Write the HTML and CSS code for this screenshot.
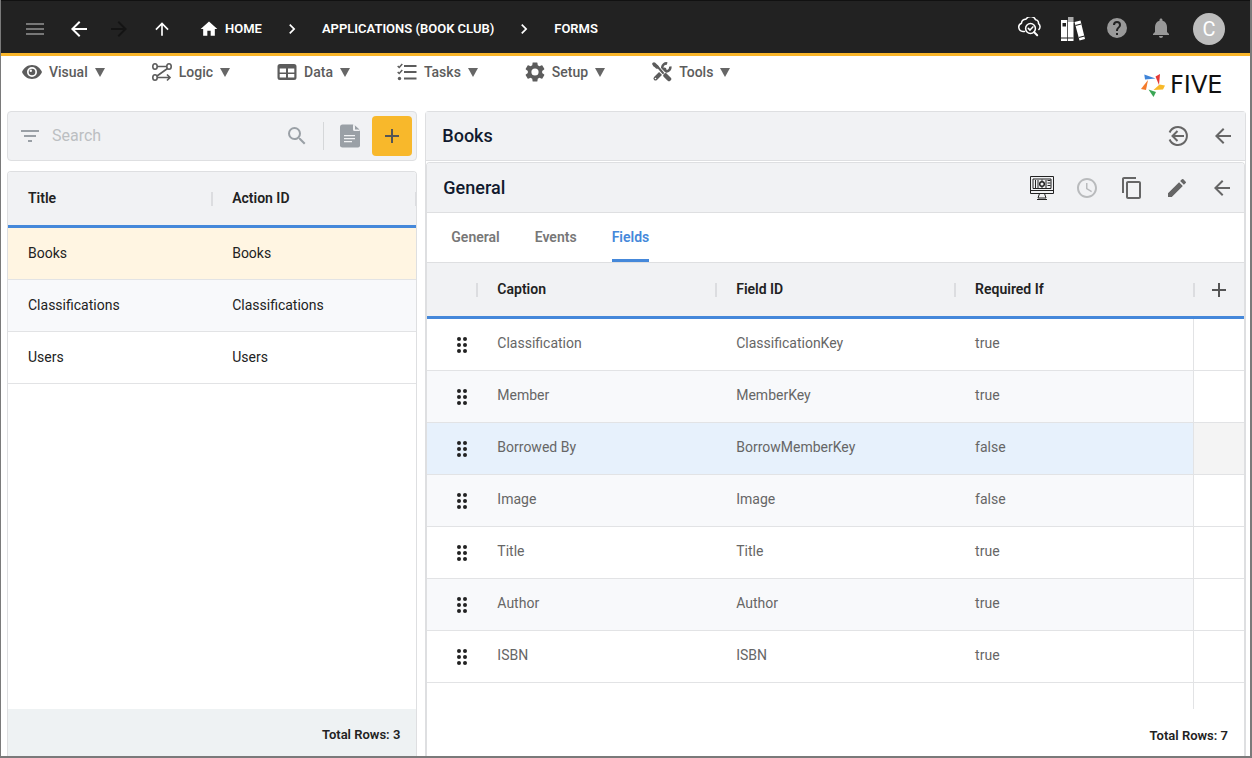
FILE: index.html
```html
<!DOCTYPE html>
<html lang="en">
<head>
<meta charset="utf-8">
<meta name="viewport" content="width=device-width, initial-scale=1">
<title>Forms - Five</title>
<link rel="stylesheet" href="styles.css">
</head>
<body>
<svg class="defs" aria-hidden="true">
  <symbol id="arrow-left" viewBox="0 0 24 24"><path d="M20 11H7.83l5.59-5.59L12 4l-8 8 8 8 1.41-1.41L7.83 13H20z"/></symbol>
  <symbol id="plus" viewBox="0 0 24 24"><path d="M19 13h-6v6h-2v-6H5v-2h6V5h2v6h6z"/></symbol>
  <symbol id="chevron" viewBox="0 0 24 24"><path d="M10 6 8.59 7.41 13.17 12l-4.58 4.59L10 18l6-6z"/></symbol>
  <symbol id="caret" viewBox="0 0 10 10"><path d="M0 1h10L5 10z"/></symbol>
  <symbol id="drag" viewBox="0 0 12 18"><g><circle cx="3" cy="3" r="2"/><circle cx="9" cy="3" r="2"/><circle cx="3" cy="9" r="2"/><circle cx="9" cy="9" r="2"/><circle cx="3" cy="15" r="2"/><circle cx="9" cy="15" r="2"/></g></symbol>
</svg>
<div class="app">
  <header class="topbar">
    <button class="nav-btn menu-btn" aria-label="Menu"><svg class="icon" viewBox="0 0 24 24"><path d="M3 18h18v-2H3zm0-5h18v-2H3zm0-7v2h18V6z"/></svg></button>
    <button class="nav-btn" aria-label="Back"><svg class="icon"><use href="#arrow-left"/></svg></button>
    <button class="nav-btn forward-btn" aria-label="Forward" disabled><svg class="icon" viewBox="0 0 24 24"><path d="m12 4-1.41 1.41L16.17 11H4v2h12.17l-5.58 5.59L12 20l8-8z"/></svg></button>
    <button class="nav-btn up-btn" aria-label="Up"><svg class="icon icon-sm" viewBox="0 0 24 24"><path d="m4 12 1.41 1.41L11 7.83V20h2V7.83l5.58 5.59L20 12l-8-8z"/></svg></button>
    <nav class="crumbs" aria-label="Breadcrumb">
      <a href="#" class="crumb"><svg class="icon icon-sm" viewBox="0 0 24 24"><path d="M10 20v-6h4v6h5v-8h3L12 3 2 12h3v8z"/></svg>HOME</a>
      <svg class="icon icon-sm"><use href="#chevron"/></svg>
      <a href="#" class="crumb">APPLICATIONS (BOOK CLUB)</a>
      <svg class="icon icon-sm"><use href="#chevron"/></svg>
      <a href="#" class="crumb">FORMS</a>
    </nav>
    <div class="tools">
      <button class="tool-btn" aria-label="Inspect cloud"><svg class="icon" viewBox="0 1 24 24"><g fill="none" stroke="currentColor" stroke-width="1.500" stroke-linecap="round" stroke-linejoin="round"><path d="M7.500 15.500H6A4.300 4.300 0 0 1 4.500 7.200C4.600 4.500 6.800 3 9 3.200 11.500-.5 17-.2 18.500 3.800c2.200.2 3.300 2 3 3.900 2 1.500 2 4.400.4 5.800"/><circle cx="13.500" cy="12.500" r="4.900"/><path d="m11.300 12.400 1.700 1.700 2.900-3.200"/><path d="m17.200 16.200 3 3" stroke-width="2"/></g></svg></button>
      <button class="tool-btn" aria-label="Library"><svg class="icon" viewBox="0 0 24 24"><path d="M0 3h6.500v21H0zM13.500 5l6-1.500L24 22l-5.500 1.500z"/><path fill="#aaa" d="M7 0h5.500v6H7z"/><path d="M7 5h5.500v19H7z"/><g fill="#222"><path d="M1.500 6H5v3.500H1.500zM0 20.500h6.500v1H0zM7 20.500h5.500v1H7zM14.300 8l5.700-1.400.3 1-5.700 1.400zM17.700 20l5.700-1.400.3 1-5.700 1.400zM6.500 3H7v21h-.5z"/></g></svg></button>
      <button class="tool-btn dim" aria-label="Help"><svg class="icon" viewBox="0 1 24 24"><path d="M12 2a10 10 0 1 0 0 20 10 10 0 0 0 0-20m1 17h-2v-2h2zm2.070-7.750-.9.920C13.450 12.900 13 13.500 13 15h-2v-.5c0-1.100.450-2.100 1.170-2.830l1.240-1.260c.370-.360.590-.860.590-1.410a2 2 0 0 0-4 0H8a4 4 0 0 1 8 0c0 .880-.360 1.680-.930 2.250"/></svg></button>
      <button class="tool-btn dim" aria-label="Notifications"><svg class="icon" viewBox="0 1 24 24"><path d="M12 22c1.100 0 2-.9 2-2h-4c0 1.100.890 2 2 2m6-6v-5c0-3.070-1.640-5.640-4.500-6.320V4c0-.830-.670-1.500-1.500-1.500s-1.500.670-1.500 1.500v.680C7.630 5.360 6 7.920 6 11v5l-2 2v1h16v-1z"/></svg></button>
      <button class="avatar" aria-label="Account">C</button>
    </div>
  </header>

  <div class="menubar">
    <nav class="menus" aria-label="Main">
      <button class="menu"><svg class="menu-icon" viewBox="0 0 20 20"><path d="M10 3C5.500 3 1.700 5.800 0 10c1.700 4.200 5.500 7 10 7s8.300-2.800 10-7c-1.700-4.200-5.500-7-10-7m0 12a5 5 0 1 1 0-10 5 5 0 0 1 0 10"/><circle cx="10" cy="10" r="3.300"/><circle cx="8.800" cy="8.700" r="1.200" fill="#fff"/></svg>Visual<svg class="caret"><use href="#caret"/></svg></button>
      <button class="menu"><svg class="menu-icon" viewBox="0 0 20 20"><g fill="none" stroke="currentColor" stroke-width="1.600"><ellipse cx="3" cy="4.500" rx="2.200" ry="2.800"/><ellipse cx="17" cy="4.500" rx="2.200" ry="2.800"/><ellipse cx="3" cy="15.500" rx="2.200" ry="2.800"/><path d="M5 4.500h10M15.500 6.500 5 14M5 15.500h13M15 12.500l3 3-3 3"/></g></svg>Logic<svg class="caret"><use href="#caret"/></svg></button>
      <button class="menu"><svg class="menu-icon" viewBox="0 0 20 20"><path fill-rule="evenodd" d="M3 2h14q2.500 0 2.500 2.500v11q0 2.500-2.500 2.500H3Q.5 18 .5 15.500v-11Q.5 2 3 2m-.3 4.500v4H9v-4zm8.300 0v4h6.300v-4zM2.700 12v3.500H9V12zm8.300 0v3.500h6.300V12z"/></svg>Data<svg class="caret"><use href="#caret"/></svg></button>
      <button class="menu"><svg class="menu-icon" viewBox="0 0 20 20"><path d="M7 3h12.500v2H7zm0 6h12.500v2H7zm0 6.500h12.500v2H7z"/><circle cx="2.500" cy="16.500" r="1.700"/><path d="m.7 4 1.500 1.500L5.300 2M.7 10l1.500 1.500L5.300 8" fill="none" stroke="currentColor" stroke-width="1.500"/></svg>Tasks<svg class="caret"><use href="#caret"/></svg></button>
      <button class="menu"><svg class="menu-icon" viewBox="2 2 20 20"><path d="M19.140 12.940c.040-.3.060-.610.060-.940s-.020-.640-.070-.940l2.030-1.580a.490.490 0 0 0 .120-.610l-1.920-3.320a.490.490 0 0 0-.590-.220l-2.390.960a7 7 0 0 0-1.620-.940l-.360-2.540a.480.480 0 0 0-.480-.410h-3.840c-.240 0-.430.170-.470.410l-.360 2.540c-.590.240-1.130.570-1.620.940l-2.390-.960c-.220-.080-.470 0-.590.220L2.740 8.870a.470.470 0 0 0 .120.610l2.030 1.580c-.050.3-.090.630-.090.940s.020.640.070.940l-2.030 1.580a.490.490 0 0 0-.120.610l1.920 3.320c.120.220.370.290.590.220l2.390-.960c.5.380 1.030.7 1.620.940l.360 2.540c.050.240.240.410.480.410h3.840c.240 0 .440-.170.470-.410l.360-2.540a6.800 6.800 0 0 0 1.620-.940l2.390.960c.220.080.470 0 .590-.220l1.920-3.320a.470.470 0 0 0-.120-.610zM12 15.600a3.600 3.600 0 1 1 0-7.200 3.600 3.600 0 0 1 0 7.200"/></svg>Setup<svg class="caret"><use href="#caret"/></svg></button>
      <button class="menu"><svg class="menu-icon" viewBox="0 0 20 20"><g stroke="currentColor" fill="none" stroke-linecap="round"><path d="m3.500 16.500 9-9" stroke-width="4"/><path d="M18.200 4.500a4 4 0 1 1-3-3" stroke-width="2.600" stroke-linecap="butt"/><path d="m3 3 9 9" stroke="#fff" stroke-width="4"/><path d="m2 3.500 3 .5 6 7" stroke-width="2"/><path d="m2 2 3 3" stroke-width="3.500"/><path d="m13.500 13.500 3.500 3.500" stroke-width="4.500"/></g><circle cx="3.500" cy="16.500" r=".8" fill="#fff"/></svg>Tools<svg class="caret"><use href="#caret"/></svg></button>
    </nav>
    <div class="brand">
      <svg class="brand-mark" viewBox="0 0 26 26"><path fill="#3f84d8" d="M4.300 2.500 15.500 6.500 5 7.500z"/><path fill="#e53a36" d="M20 2 15.500 4.500 19 13z"/><path fill="#f8b929" d="M19.500 12.500 25 13.500 23 17.500 13.500 18z"/><path fill="#3aa655" d="M8.500 17.500 16 20 13.500 25z"/><path fill="#f47b2b" d="M8 8 6 18 1 17z"/></svg>
      <span>FIVE</span>
    </div>
  </div>

  <main class="workspace">
    <section class="side">
      <form class="search" role="search">
        <svg class="icon" viewBox="0 0 24 24"><path d="M10 18h4v-2h-4zM3 6v2h18V6zm3 7h12v-2H6z"/></svg>
        <input type="search" placeholder="Search" aria-label="Search">
        <button type="button" class="plain-btn" aria-label="Search"><svg class="icon" viewBox="0 0 24 24"><path d="M15.500 14h-.790l-.280-.270A6.470 6.470 0 0 0 16 9.500 6.500 6.500 0 1 0 9.500 16c1.610 0 3.090-.590 4.230-1.570l.270.280v.790l5 4.990L20.490 19zm-6 0C7.010 14 5 11.990 5 9.500S7.010 5 9.500 5 14 7.010 14 9.500 11.990 14 9.500 14"/></svg></button>
        <span class="rule"></span>
        <button type="button" class="plain-btn doc-btn" aria-label="Document"><svg class="icon" viewBox="0 0 24 24"><path d="M4.500.5H15l7 6.500v14.500q0 2-2 2H4.500q-2.500 0-2.500-2V3Q2 .5 4.500.5"/><path fill="#f1f2f4" d="M15 .5 22 7h-5.500Q15 7 15 5.500zM6 11h11v1.300H6zm0 3h11v1.300H6zm0 3h8v1.300H6z"/><path d="M17 1.500 21.500 5.500H17z"/></svg></button>
        <button type="button" class="add-btn" aria-label="Add"><svg class="icon"><use href="#plus"/></svg></button>
      </form>

      <div class="list">
        <table class="grid">
          <thead><tr><th>Title</th><th>Action ID</th></tr></thead>
          <tbody>
            <tr class="current"><td>Books</td><td>Books</td></tr>
            <tr><td>Classifications</td><td>Classifications</td></tr>
            <tr><td>Users</td><td>Users</td></tr>
          </tbody>
        </table>
        <div class="total">Total Rows: 3</div>
      </div>
    </section>

    <section class="detail">
      <div class="bar">
        <h1>Books</h1>
        <button class="bar-btn" aria-label="Exit"><svg class="icon" viewBox="0 0 24 24"><g fill="none" stroke="currentColor" stroke-width="2"><path d="M3.600 8.500a9 9 0 1 1 0 7M18 12H7M11.500 7 6.500 12l5 5"/></g></svg></button>
        <button class="bar-btn" aria-label="Back"><svg class="icon"><use href="#arrow-left"/></svg></button>
      </div>
      <div class="card">
        <div class="bar">
          <h2>General</h2>
          <button class="bar-btn ink" aria-label="Preview"><svg class="icon" viewBox="0 0 24 24"><g fill="none" stroke="currentColor"><path d="M.5.500h23v17H.5zM.5 14.500h23M3 3h18v9.500H3zM9.500 17.500 8 22h8l-1.500-4.500M7 23.500h10"/><path d="M5.500 4v8M8 4v8M17.500 4.500h3M17.500 7h3M17.500 9.500h3M16 4v8"/><circle cx="12" cy="8" r="2.300" stroke-width="1.500"/><path d="M12 3.500v2M12 10.500v2"/></g></svg></button>
          <button class="bar-btn faded" aria-label="History"><svg class="icon" viewBox="0 0 24 24"><path d="M11.990 2C6.470 2 2 6.480 2 12s4.470 10 9.990 10C17.520 22 22 17.520 22 12S17.520 2 11.990 2M12 20c-4.420 0-8-3.580-8-8s3.580-8 8-8 8 3.580 8 8-3.580 8-8 8m.5-13H11v6l5.250 3.150.750-1.230-4.500-2.670z"/></svg></button>
          <button class="bar-btn" aria-label="Copy"><svg class="icon" viewBox="0 0 24 24"><path d="M16 1H4c-1.100 0-2 .9-2 2v14h2V3h12zm3 4H8c-1.100 0-2 .9-2 2v14c0 1.100.9 2 2 2h11c1.100 0 2-.9 2-2V7c0-1.100-.9-2-2-2m0 16H8V7h11z"/></svg></button>
          <button class="bar-btn" aria-label="Edit"><svg class="icon" viewBox="0 0 24 24"><path d="M3 17.250V21h3.750L17.810 9.940l-3.750-3.750zM20.710 7.040a1 1 0 0 0 0-1.410l-2.340-2.340a1 1 0 0 0-1.410 0l-1.830 1.830 3.750 3.750z"/></svg></button>
          <button class="bar-btn" aria-label="Close"><svg class="icon"><use href="#arrow-left"/></svg></button>
        </div>
        <div class="tabs" role="tablist">
          <button role="tab" class="tab">General</button>
          <button role="tab" class="tab">Events</button>
          <button role="tab" class="tab active" aria-selected="true">Fields</button>
        </div>
        <div class="fields">
          <table class="grid field-grid">
            <colgroup><col class="narrow"><col><col><col><col class="narrow"></colgroup>
            <thead><tr><th></th><th>Caption</th><th>Field ID</th><th>Required If</th><th class="act"><button class="plain-btn" aria-label="Add field"><svg class="icon"><use href="#plus"/></svg></button></th></tr></thead>
            <tbody>
              <tr><td class="handle"><svg><use href="#drag"/></svg></td><td>Classification</td><td>ClassificationKey</td><td>true</td><td></td></tr>
              <tr><td class="handle"><svg><use href="#drag"/></svg></td><td>Member</td><td>MemberKey</td><td>true</td><td></td></tr>
              <tr class="selected"><td class="handle"><svg><use href="#drag"/></svg></td><td>Borrowed By</td><td>BorrowMemberKey</td><td>false</td><td></td></tr>
              <tr><td class="handle"><svg><use href="#drag"/></svg></td><td>Image</td><td>Image</td><td>false</td><td></td></tr>
              <tr><td class="handle"><svg><use href="#drag"/></svg></td><td>Title</td><td>Title</td><td>true</td><td></td></tr>
              <tr><td class="handle"><svg><use href="#drag"/></svg></td><td>Author</td><td>Author</td><td>true</td><td></td></tr>
              <tr><td class="handle"><svg><use href="#drag"/></svg></td><td>ISBN</td><td>ISBN</td><td>true</td><td></td></tr>
              <tr class="rest"><td></td><td></td><td></td><td></td><td></td></tr>
            </tbody>
          </table>
        </div>
        <div class="total">Total Rows: 7</div>
      </div>
    </section>
  </main>
</div>
</body>
</html>
```

FILE: styles.css
```css
* { box-sizing: border-box; }

body {
  margin: 0;
  background: #fff;
  color: #222;
  font: 14px/20px Roboto, "Liberation Sans", sans-serif;
}

button, input {
  margin: 0;
  padding: 0;
  border: 0;
  background: none;
  color: inherit;
  font: inherit;
}

button { cursor: pointer; }

svg { display: block; flex: none; fill: currentColor; }
.defs { display: none; }
.icon { width: 24px; height: 24px; }
.icon-sm { width: 20px; height: 20px; }

.app {
  display: flex;
  flex-direction: column;
  min-height: 100vh;
  border: solid #7a7a7a;
  border-width: 0 2px 2px 1px;
}

/* Top bar */
.topbar {
  display: flex;
  align-items: center;
  height: 56px;
  padding: 3px 25px 0 14px;
  border-top: 1px solid #111;
  border-bottom: 3px solid #f9b529;
  background: #222;
  color: #fff;
}

.nav-btn, .tool-btn {
  display: flex;
  align-items: center;
  justify-content: center;
  width: 40px;
  height: 40px;
}

.menu-btn { margin-right: 4px; color: #777; }
.forward-btn { color: #141414; }
.up-btn { margin-left: 3px; }

.crumbs {
  display: flex;
  align-items: center;
  gap: 20px;
  margin-left: 17px;
}

.crumb {
  display: flex;
  align-items: center;
  gap: 6px;
  color: #fff;
  font-size: 13px;
  font-weight: 600;
  text-decoration: none;
}

.tools { display: flex; align-items: center; margin-left: auto; }
.tool-btn { width: 44px; }
.dim { color: #999; }

.avatar {
  width: 32px;
  height: 32px;
  margin-left: 10px;
  border-radius: 50%;
  background: #bdbdbd;
  font-size: 20px;
}

/* Menu row */
.menubar {
  display: flex;
  justify-content: space-between;
  height: 55px;
  padding: 6px 20px 4px 21px;
}

.menus { display: flex; align-items: flex-start; gap: 47px; }

.menu {
  display: flex;
  align-items: center;
  gap: 7px;
  color: #5c5c5c;
  font-weight: 500;
}

.menu-icon { width: 20px; height: 20px; }
.caret { width: 10px; height: 10px; color: #666; }

.brand {
  display: flex;
  align-items: center;
  gap: 4px;
  min-width: 90px;
  color: #111;
  font: 24px/26px "DejaVu Sans", sans-serif;
}

.brand-mark { width: 26px; height: 26px; }

/* Workspace */
.workspace {
  display: grid;
  flex: 1;
  grid-template-columns: 1fr 2fr;
  gap: 8px;
  padding: 0 4px 0 6px;
}

.side { display: flex; flex-direction: column; gap: 10px; min-width: 0; }

.search {
  display: flex;
  align-items: center;
  height: 50px;
  padding: 0 4px 0 10px;
  border: 1px solid #dedfe1;
  border-radius: 4px;
  background: #f1f2f4;
  color: #9aa0a6;
}

.search input {
  flex: 1;
  min-width: 0;
  margin-left: 10px;
  outline: 0;
  font-size: 16px;
}

.search input::placeholder { color: #bcbfc2; opacity: 1; }
.plain-btn { display: flex; }
.rule { width: 1px; height: 28px; margin: 0 14px; background: #d5d7d9; }

.add-btn {
  display: flex;
  align-items: center;
  justify-content: center;
  width: 40px;
  height: 40px;
  margin-left: 10px;
  border-radius: 4px;
  background: #f8b82b;
  color: #555;
}

.list {
  display: flex;
  flex: 1;
  flex-direction: column;
  overflow: hidden;
  border: 1px solid #dedfe1;
  border-bottom: 0;
  border-radius: 4px 4px 0 0;
}

/* Tables */
.grid {
  width: 100%;
  border-spacing: 0;
  table-layout: fixed;
}

.grid th, .grid td {
  height: 52px;
  padding: 0 20px 2px;
  text-align: left;
}

.grid th {
  position: relative;
  height: 56px;
  border-bottom: 3px solid #4588da;
  background: #f1f2f4;
  font-weight: 600;
}

.grid th:not(.act)::after {
  content: "";
  position: absolute;
  top: 20px;
  right: -1px;
  z-index: 1;
  width: 2px;
  height: 14px;
  background: #dcdde0;
}

.grid td { border-bottom: 1px solid #e2e3e5; }
.grid tbody tr:nth-child(even) { background: #f8f9fb; }
.grid .current { background: #fff5e2; }

.total {
  padding: 17px 16px 10px;
  color: #222;
  font-size: 13px;
  font-weight: 600;
  text-align: right;
}

.list .total { margin-top: auto; padding-top: 16px; padding-bottom: 11px; background: #eef2f3; }

/* Detail panel */
.detail {
  display: flex;
  flex-direction: column;
  min-width: 0;
  border: 1px solid #dedfe1;
  border-bottom: 0;
  border-radius: 4px 4px 0 0;
}

.bar {
  display: flex;
  align-items: center;
  height: 49px;
  padding-left: 16px;
  border-bottom: 1px solid #dedfe1;
  background: #f1f2f4;
}

.bar h1, .bar h2 {
  flex: 1;
  margin: 0;
  color: #111a2e;
  font-size: 18px;
  font-weight: 500;
}

.bar-btn {
  display: flex;
  justify-content: center;
  width: 45px;
  color: #666;
}

.ink { color: #222; }
.faded { color: #b9bbbd; }

.card {
  display: flex;
  flex: 1;
  flex-direction: column;
  margin-top: 1px;
  overflow: hidden;
  border: 1px solid #dedfe1;
  border-bottom: 0;
  border-radius: 4px 4px 0 0;
}

.card .bar { height: 50px; }

.tabs {
  display: flex;
  gap: 35px;
  height: 50px;
  padding: 0 24px;
  border-bottom: 1px solid #dedfe1;
}

.tab {
  padding-bottom: 2px;
  border: solid transparent;
  border-width: 3px 0;
  color: #777;
  font-weight: 600;
}

.tab.active { border-bottom-color: #4588da; color: #4588da; }

.fields { display: flex; flex: 1; }
.field-grid td { padding-bottom: 4px; color: #666; }
.field-grid .narrow { width: 50px; }
.field-grid th:first-child, .field-grid th.act, .field-grid .handle { padding: 0; }
.field-grid .act .plain-btn { margin: 0 auto; color: #555; }
.field-grid td:nth-child(4) { border-right: 1px solid #e2e3e5; }
.field-grid td:last-child { background: #fff; }
.field-grid tr.selected { background: #e7f1fc; }
.field-grid .selected td:last-child { background: #f4f4f4; }
.field-grid tbody tr.rest:last-child { background: #fff; }
.field-grid .rest td { height: auto; border-bottom: 0; }

.handle svg {
  width: 12px;
  height: 18px;
  margin-left: 29px;
  color: #222;
}
```
